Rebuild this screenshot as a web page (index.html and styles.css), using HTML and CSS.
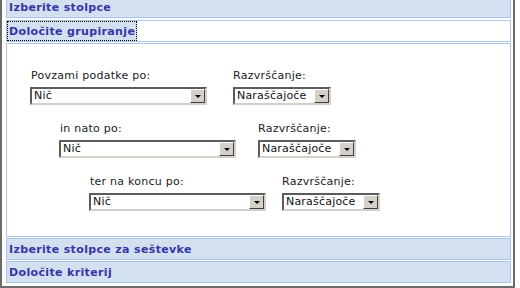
FILE: index.html
```html
<!DOCTYPE html>
<html lang="sl">
<head>
    <meta charset="UTF-8">
    <title>Poročilo | Grupiranje</title>
    <link rel="stylesheet" href="styles.css">
</head>
<body>
    <div class="frame">
        <!-- collapsed step -->
        <div class="panel">
            <span class="panel-title">Izberite stolpce</span>
        </div>

        <!-- open step -->
        <div class="panel panel-open">
            <a href="#" class="panel-title focused">Določite grupiranje</a>
        </div>

        <div class="panel-body">
            <div class="group-row row-1">
                <div class="field field-main">
                    <label>Povzami podatke po:</label>
                    <div class="select select-wide"><span class="select-text">Nič</span><span class="arrow"></span></div>
                </div>
                <div class="field">
                    <label>Razvrščanje:</label>
                    <div class="select select-sort"><span class="select-text">Naraščajoče</span><span class="arrow"></span></div>
                </div>
            </div>

            <div class="group-row row-2">
                <div class="field field-main">
                    <label>in nato po:</label>
                    <div class="select select-wide"><span class="select-text">Nič</span><span class="arrow"></span></div>
                </div>
                <div class="field">
                    <label>Razvrščanje:</label>
                    <div class="select select-sort"><span class="select-text">Naraščajoče</span><span class="arrow"></span></div>
                </div>
            </div>

            <div class="group-row row-3">
                <div class="field field-main">
                    <label>ter na koncu po:</label>
                    <div class="select select-wide"><span class="select-text">Nič</span><span class="arrow"></span></div>
                </div>
                <div class="field">
                    <label>Razvrščanje:</label>
                    <div class="select select-sort"><span class="select-text">Naraščajoče</span><span class="arrow"></span></div>
                </div>
            </div>
        </div>

        <div class="panel">
            <span class="panel-title">Izberite stolpce za seštevke</span>
        </div>
        <div class="panel">
            <span class="panel-title">Določite kriterij</span>
        </div>
    </div>
</body>
</html>
```

FILE: styles.css
```css
* {
    margin: 0;
    padding: 0;
    box-sizing: border-box;
    font-family: 'DejaVu Sans', Verdana, sans-serif;
}

body {
    background: #fff;
    width: 520px;
    height: 288px;
    overflow: hidden;
}

/* outer window frame, top edge is scrolled away */
.frame {
    width: 515px;
    margin-top: -4px;
    padding: 0 2px 2px 4px;
    border-left: 2px solid #6b6b6b;
    border-right: 2px solid #6b6b6b;
    border-bottom: 2px solid #6b6b6b;
}

/* Step headers */
.panel {
    height: 22px;
    border: 1px solid #abc5e8;
    background: #d3e0f0;
    margin-bottom: 1px;
    display: flex;
    align-items: stretch;
}

.panel:first-child {
    margin-bottom: 2px;
}

.panel-title {
    display: flex;
    align-items: center;
    padding: 0 2px;
    font-size: 11px;
    font-weight: bold;
    letter-spacing: 0.35px;
    color: #3535a6;
    text-decoration: none;
}

.panel-open {
    background: #fff;
}

.panel-title.focused {
    background: #d3e0f0;
    outline: 1px dotted #000;
    outline-offset: -1px;
    padding-right: 2px;
}

/* Grouping form */
.panel-body {
    height: 194px;
    border: 1px solid #abc5e8;
    background: #fff;
    margin-bottom: 1px;
    padding-top: 25px;
}

.group-row {
    display: flex;
    margin-bottom: 17px;
}

.row-1 { padding-left: 23px; }
.row-1 .field-main { width: 203px; }

.row-2 { padding-left: 52px; }
.row-2 .field-main { width: 199px; }

.row-3 { padding-left: 82px; }
.row-3 .field-main { width: 193px; }

.field label {
    display: block;
    height: 13px;
    line-height: 13px;
    margin-bottom: 5px;
    font-size: 11px;
    letter-spacing: 0.25px;
    color: #222;
}

.field-main label {
    padding-left: 1px;
}

/* old style dropdowns */
.select {
    display: flex;
    height: 18px;
    border: 2px solid;
    border-color: #5c5c5c #d4d0c8 #d4d0c8 #5c5c5c;
    background: #fff;
}

.select-wide { width: 177px; }
.select-sort { width: 98px; }

.select-text {
    flex: 1;
    padding-left: 2px;
    font-size: 11px;
    letter-spacing: 0.2px;
    line-height: 14px;
    color: #111;
    white-space: nowrap;
    overflow: hidden;
}

.arrow {
    width: 15px;
    height: 14px;
    background: #d4d0c8;
    border: 1px solid;
    border-color: #fff #404040 #404040 #fff;
    display: flex;
    align-items: center;
    justify-content: center;
}

.arrow::after {
    content: "";
    width: 0;
    height: 0;
    border-left: 3px solid transparent;
    border-right: 3px solid transparent;
    border-top: 3px solid #000;
    margin-top: 1px;
}
```
